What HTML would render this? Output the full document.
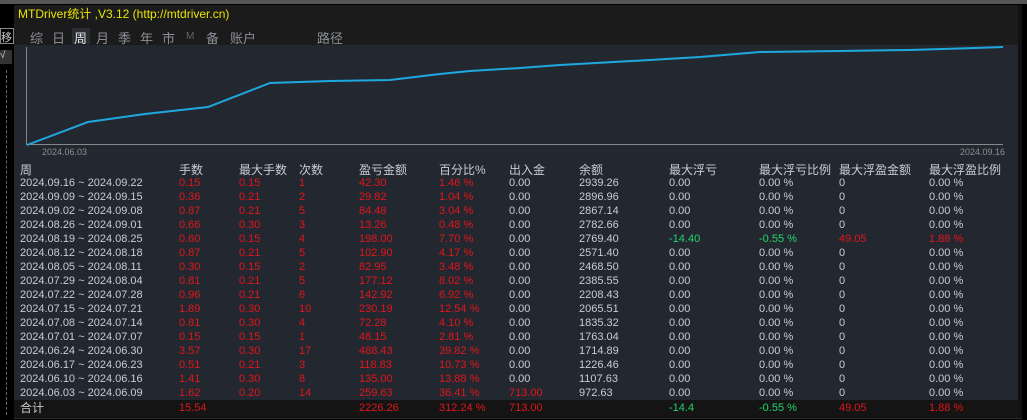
<!DOCTYPE html>
<html><head><meta charset="utf-8"><style>
body{margin:0;width:1027px;height:420px;background:#000;overflow:hidden;font-family:"Liberation Sans","Noto Sans CJK SC",sans-serif;position:relative}
.p{position:absolute}
#panel{left:14px;top:5px;width:1008px;height:413px;background:#232830;border-top:1px solid #ccc}
#title{left:14px;top:5px;width:1008px;height:40px;background:#1b1b1b}
.t{position:absolute;font-size:11px;color:#c8ccd2;white-space:nowrap;line-height:13px}
.r{color:#e0161a}.g{color:#22d36a}
.tab{position:absolute;top:28px;font-size:13px;color:#8a8f96}
</style></head><body>
<div class="p" style="left:0;top:0;width:1027px;height:4px;background:#555"></div>
<div id="panel" class="p"></div>
<div id="title" class="p"></div>
<div class="p" style="left:1018px;top:5px;width:4px;height:413px;background:#111"></div>
<div class="p" style="left:0;top:28px;width:12px;height:14px;border:1px solid #888;color:#ccc;font-size:11px">移</div>
<div class="p" style="left:0;top:50px;width:12px;height:14px;background:#333;color:#ccc;font-size:10px">√</div>
<div class="p" style="left:6px;top:70px;width:1px;height:345px;border-left:1px dashed #666"></div>
<div class="t" style="left:18px;top:8px;color:#e8e600;font-size:12px">MTDriver统计 ,V3.12 (http://mtdriver.cn)</div>
<div class="p" style="left:72px;top:28px;width:18px;height:16px;background:#2a2e34"></div>
<div class="tab" style="left:30px">综</div><div class="tab" style="left:52px">日</div><div class="tab" style="left:74px;color:#dfe2e6">周</div><div class="tab" style="left:96px">月</div><div class="tab" style="left:118px">季</div><div class="tab" style="left:140px">年</div><div class="tab" style="left:162px">市</div><div class="tab" style="left:186px;font-size:10px;top:31px;color:#666">M</div><div class="tab" style="left:206px">备</div><div class="tab" style="left:230px">账户</div><div class="tab" style="left:317px">路径</div>
<svg class="p" style="left:0;top:0" width="1027" height="160">
<line x1="26.5" y1="47" x2="26.5" y2="145" stroke="#888"/>
<line x1="26" y1="144.5" x2="1003" y2="144.5" stroke="#888"/>
<polyline fill="none" stroke="#1ea8e0" stroke-width="2" points="27,145 88,122 145,114 208,107 270,83 330,81 390,80 440,74 470,71 520,68 560,65 650,60 700,57 760,52 840,51 910,50 975,48 1003,47"/>
</svg>
<div class="t" style="left:42px;top:146px;font-size:9px;color:#8a8f96">2024.06.03</div>
<div class="t" style="left:960px;top:146px;font-size:9px;color:#8a8f96">2024.09.16</div>
<div class="p" style="left:14px;top:400px;width:1004px;height:18px;background:#141414"></div>
<div id="tb"></div>
<script>
var cols=[20,179,239,299,359,439,509,579,669,759,839,929];
var hdr=["周","手数","最大手数","次数","盈亏金额","百分比%","出入金","余额","最大浮亏","最大浮亏比例","最大浮盈金额","最大浮盈比例"];
var rows=[
["2024.09.16 ~ 2024.09.22","0.15","0.15","1","42.30","1.46 %","0.00","2939.26"],
["2024.09.09 ~ 2024.09.15","0.36","0.21","2","29.82","1.04 %","0.00","2896.96"],
["2024.09.02 ~ 2024.09.08","0.87","0.21","5","84.48","3.04 %","0.00","2867.14"],
["2024.08.26 ~ 2024.09.01","0.66","0.30","3","13.26","0.48 %","0.00","2782.66"],
["2024.08.19 ~ 2024.08.25","0.60","0.15","4","198.00","7.70 %","0.00","2769.40"],
["2024.08.12 ~ 2024.08.18","0.87","0.21","5","102.90","4.17 %","0.00","2571.40"],
["2024.08.05 ~ 2024.08.11","0.30","0.15","2","82.95","3.48 %","0.00","2468.50"],
["2024.07.29 ~ 2024.08.04","0.81","0.21","5","177.12","8.02 %","0.00","2385.55"],
["2024.07.22 ~ 2024.07.28","0.96","0.21","6","142.92","6.92 %","0.00","2208.43"],
["2024.07.15 ~ 2024.07.21","1.89","0.30","10","230.19","12.54 %","0.00","2065.51"],
["2024.07.08 ~ 2024.07.14","0.81","0.30","4","72.28","4.10 %","0.00","1835.32"],
["2024.07.01 ~ 2024.07.07","0.15","0.15","1","48.15","2.81 %","0.00","1763.04"],
["2024.06.24 ~ 2024.06.30","3.57","0.30","17","488.43","39.82 %","0.00","1714.89"],
["2024.06.17 ~ 2024.06.23","0.51","0.21","3","118.83","10.73 %","0.00","1226.46"],
["2024.06.10 ~ 2024.06.16","1.41","0.30","8","135.00","13.88 %","0.00","1107.63"],
["2024.06.03 ~ 2024.06.09","1.62","0.20","14","259.63","36.41 %","713.00","972.63"]];
var h="";
hdr.forEach(function(t,i){h+='<div class="t" style="left:'+cols[i]+'px;top:163px;font-size:12px;line-height:14px">'+t+'</div>';});
rows.forEach(function(r,j){
 var y=177+j*14;
 var ext=(j==4)?[["-14.40","g"],["-0.55 %","g"],["49.05","r"],["1.88 %","r"]]:[["0.00",""],["0.00 %",""],["0",""],["0.00 %",""]];
 var all=r.map(function(v,i){return [v,(i>=1&&i<=5)||(i==6&&v!="0.00")?"r":""]}).concat(ext);
 all.forEach(function(c,i){h+='<div class="t '+c[1]+'" style="left:'+cols[i]+'px;top:'+y+'px">'+c[0]+'</div>';});
});
var tot=[["合计","",20],["15.54","r",179],["2226.26","r",359],["312.24 %","r",439],["713.00","r",509],["-14.4","g",669],["-0.55 %","g",759],["49.05","r",839],["1.88 %","r",929]];
tot.forEach(function(c){h+='<div class="t '+c[1]+'" style="left:'+c[2]+'px;top:402px;font-size:'+(c[0]=="合计"?12:11)+'px">'+c[0]+'</div>';});
document.getElementById("tb").innerHTML=h;
</script>
</body></html>
